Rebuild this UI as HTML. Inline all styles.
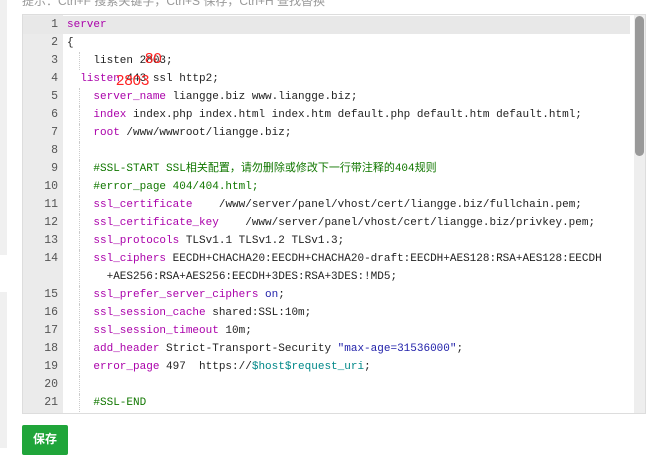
<!DOCTYPE html>
<html><head><meta charset="utf-8"><style>
body{margin:0;width:650px;height:448px;overflow:hidden;background:#fff;position:relative;font-family:"Liberation Sans","Noto Sans CJK SC",sans-serif}
.hint{position:absolute;left:22px;top:-8px;font-size:12px;color:#999;white-space:nowrap}
.side1{position:absolute;left:0;top:0;width:7px;height:255px;background:#f0f0f0}
.side2{position:absolute;left:0;top:292px;width:7px;height:156px;background:#f0f0f0}
.ed{position:absolute;left:22px;top:14px;width:622px;height:398px;border:1px solid #ddd;background:#fff;overflow:hidden}
.gut{position:absolute;left:0;top:0;width:40px;height:100%;background:#ebebeb}
.act{position:absolute;left:0;top:1px;width:607px;height:18px;background:#e8e8e8}
.ln{position:absolute;left:0;width:35px;text-align:right;font:11.5px/18px "Liberation Mono",monospace;color:#555}
.cl{position:absolute;left:44px;white-space:pre;font:11px/18px "Liberation Mono","Noto Sans CJK SC",monospace;color:#222}
.g{position:absolute;left:56px;width:0;border-left:1px dotted #ccc;height:18px}
.k{color:#a0a}.c{color:#170}.b{color:#22a}.v{color:#088}
.sb{position:absolute;left:611px;top:0;width:11px;height:398px;background:#eee}
.th{position:absolute;left:612px;top:1px;width:9px;height:140px;background:#999;border-radius:5px}
.red{position:absolute;color:#f22;font:15px "Liberation Sans",sans-serif}
.btn{position:absolute;left:22px;top:425px;width:46px;height:30px;background:#20a53a;border-radius:2px;color:#fff;font-weight:bold;font-size:12px;text-align:center;line-height:28px}
</style></head><body>
<div class="hint">提示：Ctrl+F 搜索关键字，Ctrl+S 保存，Ctrl+H 查找替换</div>
<div class="side1"></div><div class="side2"></div>
<div class="ed">
<div class="gut"></div>
<div class="act"></div>
<div class="ln" style="top:1px">1</div><div class="cl" style="top:1px"><span class="k">server</span></div>
<div class="ln" style="top:19px">2</div><div class="cl" style="top:19px">{</div>
<div class="ln" style="top:37px">3</div><div class="g" style="top:37px"></div><div class="cl" style="top:37px">    listen 2803;</div>
<div class="ln" style="top:55px">4</div><div class="cl" style="top:55px">  <span class="k">listen</span> 443 ssl http2;</div>
<div class="ln" style="top:73px">5</div><div class="g" style="top:73px"></div><div class="cl" style="top:73px">    <span class="k">server_name</span> liangge.biz www.liangge.biz;</div>
<div class="ln" style="top:91px">6</div><div class="g" style="top:91px"></div><div class="cl" style="top:91px">    <span class="k">index</span> index.php index.html index.htm default.php default.htm default.html;</div>
<div class="ln" style="top:109px">7</div><div class="g" style="top:109px"></div><div class="cl" style="top:109px">    <span class="k">root</span> /www/wwwroot/liangge.biz;</div>
<div class="ln" style="top:127px">8</div><div class="g" style="top:127px"></div>
<div class="ln" style="top:145px">9</div><div class="g" style="top:145px"></div><div class="cl" style="top:145px">    <span class="c">#SSL-START SSL相关配置，请勿删除或修改下一行带注释的404规则</span></div>
<div class="ln" style="top:163px">10</div><div class="g" style="top:163px"></div><div class="cl" style="top:163px">    <span class="c">#error_page 404/404.html;</span></div>
<div class="ln" style="top:181px">11</div><div class="g" style="top:181px"></div><div class="cl" style="top:181px">    <span class="k">ssl_certificate</span>    /www/server/panel/vhost/cert/liangge.biz/fullchain.pem;</div>
<div class="ln" style="top:199px">12</div><div class="g" style="top:199px"></div><div class="cl" style="top:199px">    <span class="k">ssl_certificate_key</span>    /www/server/panel/vhost/cert/liangge.biz/privkey.pem;</div>
<div class="ln" style="top:217px">13</div><div class="g" style="top:217px"></div><div class="cl" style="top:217px">    <span class="k">ssl_protocols</span> TLSv1.1 TLSv1.2 TLSv1.3;</div>
<div class="ln" style="top:235px">14</div><div class="g" style="top:235px;height:36px"></div><div class="cl" style="top:235px">    <span class="k">ssl_ciphers</span> EECDH+CHACHA20:EECDH+CHACHA20-draft:EECDH+AES128:RSA+AES128:EECDH
      +AES256:RSA+AES256:EECDH+3DES:RSA+3DES:!MD5;</div>
<div class="ln" style="top:271px">15</div><div class="g" style="top:271px"></div><div class="cl" style="top:271px">    <span class="k">ssl_prefer_server_ciphers</span> <span class="b">on</span>;</div>
<div class="ln" style="top:289px">16</div><div class="g" style="top:289px"></div><div class="cl" style="top:289px">    <span class="k">ssl_session_cache</span> shared:SSL:10m;</div>
<div class="ln" style="top:307px">17</div><div class="g" style="top:307px"></div><div class="cl" style="top:307px">    <span class="k">ssl_session_timeout</span> 10m;</div>
<div class="ln" style="top:325px">18</div><div class="g" style="top:325px"></div><div class="cl" style="top:325px">    <span class="k">add_header</span> Strict-Transport-Security <span class="b">"max-age=31536000"</span>;</div>
<div class="ln" style="top:343px">19</div><div class="g" style="top:343px"></div><div class="cl" style="top:343px">    <span class="k">error_page</span> 497  https://<span class="v">$host$request_uri</span>;</div>
<div class="ln" style="top:361px">20</div><div class="g" style="top:361px"></div>
<div class="ln" style="top:379px">21</div><div class="g" style="top:379px"></div><div class="cl" style="top:379px">    <span class="c">#SSL-END</span></div>
<div class="sb"></div><div class="th"></div>
</div>
<div class="red" style="left:145px;top:50px">80</div>
<div class="red" style="left:116px;top:72px">2803</div>
<div class="btn">保存</div>
</body></html>
